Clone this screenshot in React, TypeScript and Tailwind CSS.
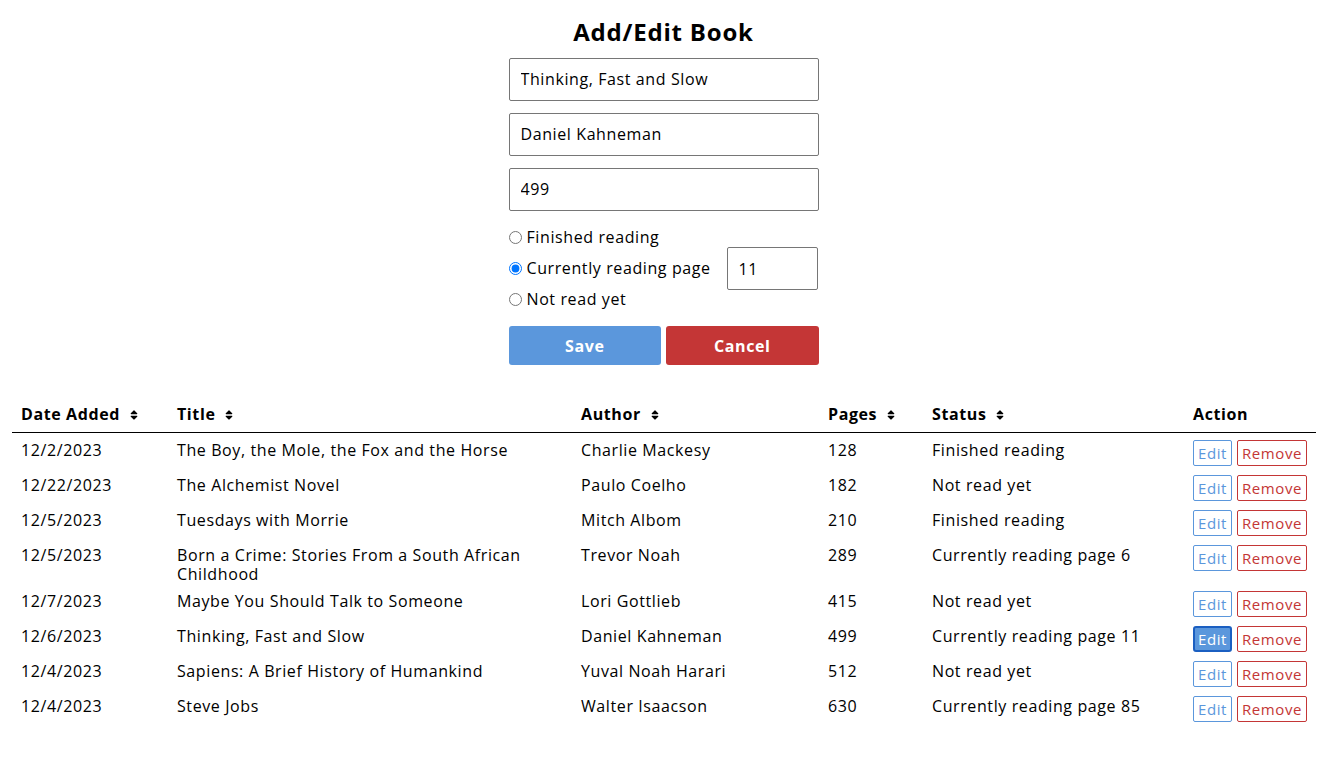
import React from "react";
import { FaSort } from "react-icons/fa";

type Book = {
  date: string;
  title: React.ReactNode;
  author: string;
  pages: string;
  status: string;
  active?: boolean;
};

const books: Book[] = [
  { date: "12/2/2023", title: "The Boy, the Mole, the Fox and the Horse", author: "Charlie Mackesy", pages: "128", status: "Finished reading" },
  { date: "12/22/2023", title: "The Alchemist Novel", author: "Paulo Coelho", pages: "182", status: "Not read yet" },
  { date: "12/5/2023", title: "Tuesdays with Morrie", author: "Mitch Albom", pages: "210", status: "Finished reading" },
  {
    date: "12/5/2023",
    title: (
      <>
        Born a Crime: Stories From a South African
        <br />
        Childhood
      </>
    ),
    author: "Trevor Noah",
    pages: "289",
    status: "Currently reading page 6",
  },
  { date: "12/7/2023", title: "Maybe You Should Talk to Someone", author: "Lori Gottlieb", pages: "415", status: "Not read yet" },
  { date: "12/6/2023", title: "Thinking, Fast and Slow", author: "Daniel Kahneman", pages: "499", status: "Currently reading page 11", active: true },
  { date: "12/4/2023", title: "Sapiens: A Brief History of Humankind", author: "Yuval Noah Harari", pages: "512", status: "Not read yet" },
  { date: "12/4/2023", title: "Steve Jobs", author: "Walter Isaacson", pages: "630", status: "Currently reading page 85" },
];

const cols = "grid grid-cols-[156px_404px_247px_104px_261px_1fr]";

function Head({ label, sort = true }: { label: string; sort?: boolean }) {
  return (
    <div className="px-[9px] pt-[5px] pb-[8px] leading-[19px] font-bold flex items-center">
      <span>{label}</span>
      {sort && <FaSort className="ml-[8px] text-[12px]" />}
    </div>
  );
}

function Cell({ children }: { children: React.ReactNode }) {
  return <div className="px-[9px] py-[4px] leading-[19px]">{children}</div>;
}

export default function App() {
  return (
    <div
      className="min-h-screen bg-white text-black text-[16px] tracking-[0.6px]"
      style={{ fontFamily: '"Open Sans", "Liberation Sans", sans-serif' }}
    >
      <div className="flex flex-col items-center pt-[17px]">
        <h1 className="text-[24px] leading-[29px] font-bold tracking-[0.8px]">Add/Edit Book</h1>
        <div className="w-[310px] mt-[12px] flex flex-col gap-[12px]">
          <input
            className="h-[43px] w-full border border-[#767676] rounded-[2px] px-[11px] pb-[1px] outline-none"
            defaultValue="Thinking, Fast and Slow"
          />
          <input
            className="h-[43px] w-full border border-[#767676] rounded-[2px] px-[11px] pb-[1px] outline-none"
            defaultValue="Daniel Kahneman"
          />
          <input
            className="h-[43px] w-full border border-[#767676] rounded-[2px] px-[11px] pb-[1px] outline-none"
            defaultValue="499"
          />
        </div>
        <div className="w-[310px] mt-[17px] flex flex-col">
          <label className="flex items-center h-[19px] leading-[19px]">
            <input type="radio" name="st" className="w-[13px] h-[13px] mr-[5px]" />
            Finished reading
          </label>
          <div className="flex items-center h-[43px]">
            <label className="flex items-center leading-[19px]">
              <input type="radio" name="st" defaultChecked className="w-[13px] h-[13px] mr-[5px]" />
              Currently reading page
            </label>
            <input
              className="ml-auto mr-[1px] h-[43px] w-[91px] border border-[#767676] rounded-[2px] px-[11px] outline-none"
              defaultValue="11"
            />
          </div>
          <label className="flex items-center h-[19px] leading-[19px]">
            <input type="radio" name="st" className="w-[13px] h-[13px] mr-[5px]" />
            Not read yet
          </label>
        </div>
        <div className="w-[310px] mt-[17px] flex gap-[5px]">
          <button className="flex-1 h-[39px] rounded-[3px] bg-[#5b97dc] text-white font-bold">Save</button>
          <button className="flex-1 h-[39px] rounded-[3px] bg-[#c43636] text-white font-bold">Cancel</button>
        </div>
      </div>

      <div className="ml-[12px] w-[1304px] mt-[35px]">
        <div className={`${cols} border-b border-black`}>
          <Head label="Date Added" />
          <Head label="Title" />
          <Head label="Author" />
          <Head label="Pages" />
          <Head label="Status" />
          <Head label="Action" sort={false} />
        </div>
        <div className="pt-[4px]">
          {books.map((b, i) => (
            <div key={i} className={cols}>
              <Cell>{b.date}</Cell>
              <Cell>{b.title}</Cell>
              <Cell>{b.author}</Cell>
              <Cell>{b.pages}</Cell>
              <Cell>{b.status}</Cell>
              <div className="px-[9px] pt-[3px] pb-[6px] flex gap-[5px] items-start">
                {b.active ? (
                  <button className="w-[39px] h-[26px] rounded-[3px] border-2 border-[#1b5fc1] bg-[#5b97dc] text-white text-[15px] leading-none flex items-center justify-center">
                    Edit
                  </button>
                ) : (
                  <button className="w-[39px] h-[26px] rounded-[2px] border border-[#5b97dc] text-[#5b97dc] text-[15px] leading-none flex items-center justify-center">
                    Edit
                  </button>
                )}
                <button className="w-[70px] h-[26px] rounded-[2px] border border-[#c43636] text-[#c43636] text-[15px] leading-none flex items-center justify-center">
                  Remove
                </button>
              </div>
            </div>
          ))}
        </div>
      </div>
    </div>
  );
}
